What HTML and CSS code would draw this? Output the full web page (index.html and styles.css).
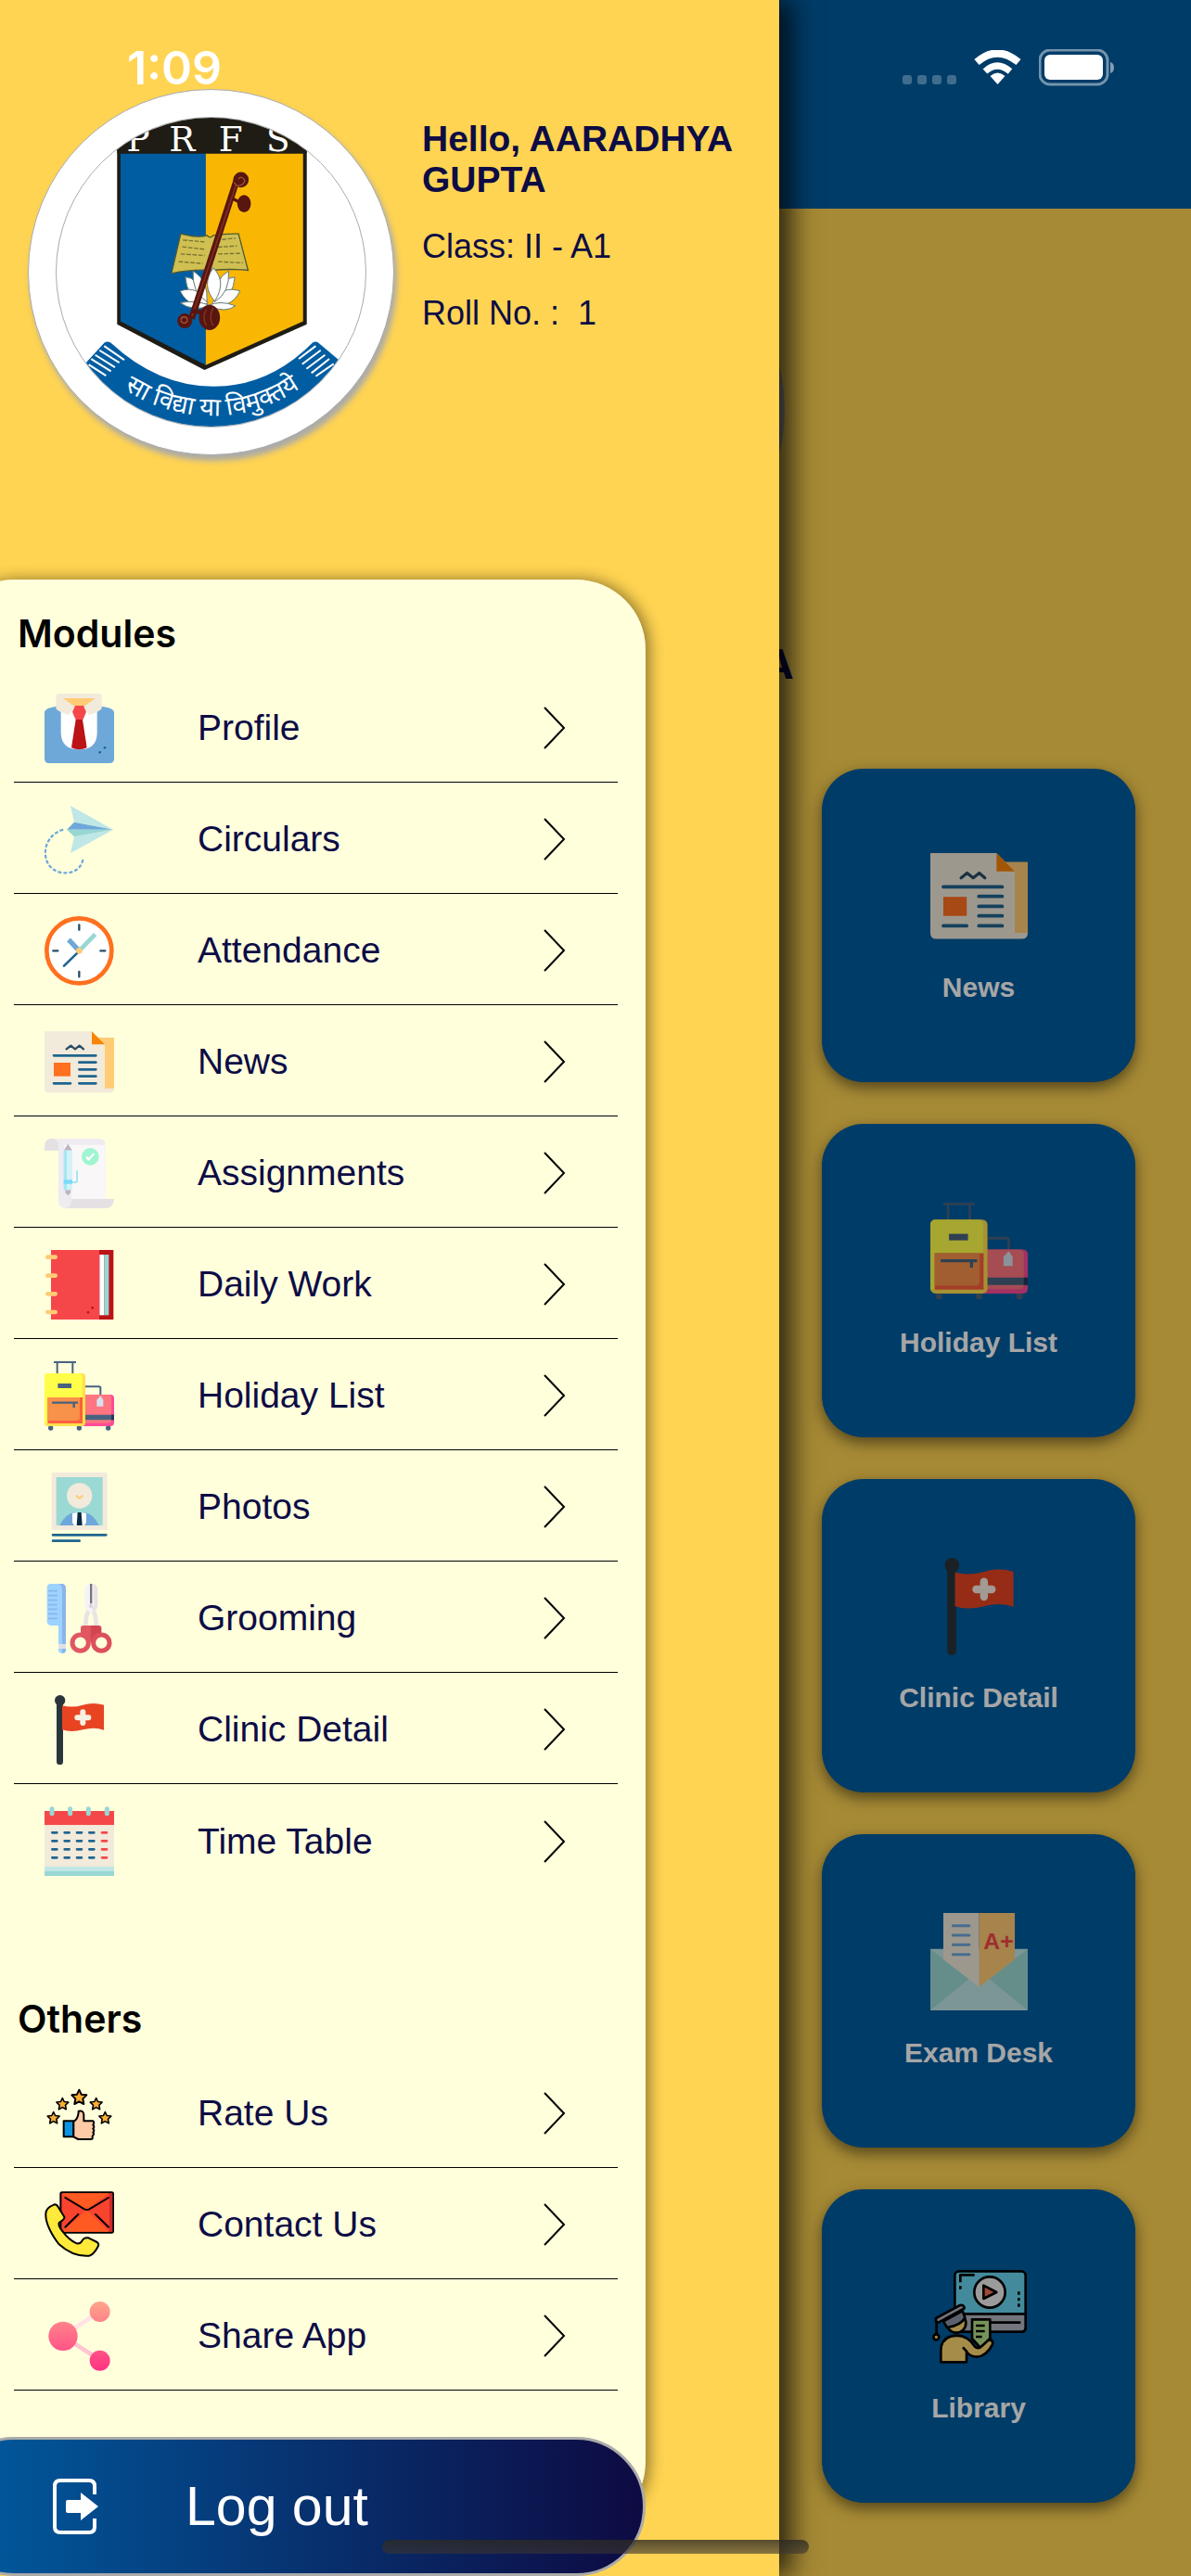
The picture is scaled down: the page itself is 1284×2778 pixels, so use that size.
FILE: index.html
```html
<!DOCTYPE html>
<html lang="en">

<head>
    <meta charset="UTF-8">
    <meta name="viewport" content="width=device-width, initial-scale=1.0">
    <title>PRFS School App</title>
    <link rel="stylesheet" href="styles.css">
</head>

<body>
    <!-- icons used in both the menu and the tiles -->
    <svg class="sprite" aria-hidden="true">
        <symbol id="icon-news" viewBox="0 0 225 225">
            <path d="M170 33h55v166h-55z" fill="#ffcb75" />
            <path d="M0 13h153l42 42v142h30q0 14-14 14H14q-14 0-14-14z" fill="#f2eada" />
            <path d="M153 13v42h42z" fill="#f98407" />
            <path d="M30 114h54v44H30z" fill="#ff701f" />
            <path d="M71 70l14-11 14 11 14-11 13 11" fill="none" stroke="#294c68" stroke-width="7" stroke-linecap="round" stroke-linejoin="round" />
            <path d="M30 91h136M112 113h54M112 136h54M112 158h54M112 181h54M30 181h54" stroke="#1f6590" stroke-width="8" stroke-linecap="round" />
        </symbol>
        <symbol id="icon-holiday" viewBox="0 0 225 225">
            <path d="M30 3h72M41 3v40M91 3v40M130 82h46q5 0 5 5v28" fill="none" stroke="#47637f" stroke-width="6" />
            <circle cx="20" cy="216" r="8" fill="#47637f" />
            <circle cx="112" cy="216" r="8" fill="#47637f" />
            <circle cx="206" cy="216" r="8" fill="#47637f" />
            <path d="M120 108h93q12 0 12 12v78q0 12-12 12h-93z" fill="#fe4b97" />
            <path d="M120 108h86q10 0 10 12v68q0 12-10 12h-86z" fill="#ff7580" />
            <path d="M120 173h105v17H120z" fill="#47637f" />
            <path d="M216 173h9v17h-9z" fill="#26365c" />
            <path d="M181 112l9 13v21h-21v-21z" fill="#d8e1ee" />
            <rect y="39" width="132" height="171" rx="12" fill="#ffe04d" />
            <path d="M12 39h98q12 0 12 12v138q0 12-12 12H0V51q0-12 12-12z" fill="#ffff4a" />
            <path d="M43 72h44v15H43z" fill="#47637f" />
            <path d="M10 117h113v84H10z" fill="#fc5f3f" />
            <path d="M10 117h104v64q0 11-11 11H10z" fill="#f8914a" />
            <path d="M24 134h84M95 134v16" stroke="#47637f" stroke-width="7" />
        </symbol>
        <symbol id="icon-clinic" viewBox="0 0 225 225">
            <circle cx="50" cy="17" r="17" fill="#2a353b" />
            <rect x="39" y="14" width="21" height="211" rx="10" fill="#2a353b" />
            <path d="M57 34Q90 42 124 32T192 32V113Q162 102 124 112T57 112z" fill="#e84422" />
            <path d="M124 55v35M106 73h36" stroke="#f7efe2" stroke-width="18" stroke-linecap="round" />
        </symbol>
        <symbol id="icon-arrow" viewBox="0 0 24 46">
            <path d="M1 1l21 22L1 45" fill="none" stroke="#000" stroke-width="2" />
        </symbol>
    </svg>

    <div class="status-bar">
        <span class="time">1:09</span>
        <div class="signals">
            <svg class="dots" viewBox="0 0 58 10">
                <g fill="#fff" opacity="0.25">
                    <rect width="10" height="10" rx="3" />
                    <rect x="16" width="10" height="10" rx="3" />
                    <rect x="32" width="10" height="10" rx="3" />
                    <rect x="48" width="10" height="10" rx="3" />
                </g>
            </svg>
            <svg class="wifi" viewBox="0 0 51 38">
                <path d="M3 13Q25 -6 48 13" fill="none" stroke="#fff" stroke-width="8" />
                <path d="M12 23Q25 11 39 23" fill="none" stroke="#fff" stroke-width="7" />
                <path d="M25.500 37l-8-9q8-7 16 0z" fill="#fff" />
            </svg>
            <svg class="battery" viewBox="0 0 82 40">
                <rect x="1" y="1" width="73" height="37" rx="11" fill="none" stroke="#fff" stroke-width="3" opacity="0.45" />
                <rect x="6" y="6" width="63" height="27" rx="6" fill="#fff" />
                <path d="M77 14q4 1 4 6t-4 6z" fill="#fff" opacity="0.5" />
            </svg>
        </div>
    </div>

    <main class="home">
        <header class="app-bar"></header>
        <div class="student">
            <div class="student-photo"></div>
            <h1>AARADHYA&nbsp; GUPTA</h1>
        </div>
        <div class="tiles">
            <a class="tile" href="#news">
                <svg><use href="#icon-news" /></svg>
                <span>News</span>
            </a>
            <a class="tile" href="#holidays">
                <svg><use href="#icon-holiday" /></svg>
                <span>Holiday List</span>
            </a>
            <a class="tile" href="#clinic">
                <svg><use href="#icon-clinic" /></svg>
                <span>Clinic Detail</span>
            </a>
            <a class="tile" href="#exams">
                <svg viewBox="0 0 315 315">
                    <path d="M0 116h315v199H0z" fill="#bfe7e6" />
                    <path d="M0 116l125 98L0 315zM315 116l-125 98 125 101z" fill="#9bdbd5" />
                    <path d="M42 0h116v239L42 150z" fill="#f2eada" />
                    <path d="M158 0h115v150l-115 89z" fill="#ffcb75" />
                    <path d="M73 41h53M73 72h53M73 103h53M73 134h53" stroke="#6ea8da" stroke-width="9" stroke-linecap="round" />
                    <text x="172" y="117" class="grade">A+</text>
                </svg>
                <span>Exam Desk</span>
            </a>
            <a class="tile" href="#library">
                <svg viewBox="0 0 315 315">
                    <g stroke="#000" stroke-width="8" stroke-linejoin="round">
                        <rect x="79" y="10" width="229" height="196" rx="14" fill="#67d6f0" />
                        <path d="M79 148h229v44q0 14-14 14H93q-14 0-14-14z" fill="#b1b4c0" />
                        <path d="M190 176h102M97 46V22h46M97 58v10M286 76v10M286 96v10M286 115v10" fill="none" />
                        <circle cx="192" cy="78" r="50" fill="#eee" />
                        <path d="M172 56v43l42-21z" fill="#f0705a" />
                        <circle cx="84" cy="178" r="31" fill="#fed76f" />
                        <path d="M42 172l62-34 8 22q-12 25-58 32z" fill="#8d96a8" />
                        <path d="M18 162l78-42q14-2 14 10L26 176l-8-4z" fill="#b1b4c0" />
                        <path d="M20 175v40" />
                        <circle cx="19" cy="223" r="9" fill="#fed76f" />
                        <path d="M135 166h58v62l-29 32-29-32z" fill="#b4e28a" />
                        <path d="M147 186h29M147 204h29M147 222h20" />
                        <path d="M34 304v-38q0-44 50-48 38 0 60 36 12 10 26-5l22-20q12 6 9 18-22 40-52 40-18 0-32-16v33z" fill="#fed76f" />
                        <path d="M105 256l14 15" />
                    </g>
                </svg>
                <span>Library</span>
            </a>
        </div>
    </main>

    <div class="overlay"></div>

    <aside class="drawer">
        <div class="drawer-header">
            <div class="avatar">
                <svg viewBox="183 379 1000 1000" role="img" aria-label="School crest">
                    <path d="M379 370h614v124H379z" fill="#1f1c15" />
                    <path d="M379 480h614v568L662 1196 379 1048z" fill="#1f1c15" />
                    <path d="M390 495h276v685L390 1038z" fill="#005da2" />
                    <path d="M666 495h315v543L666 1180z" fill="#f9b704" />
                    <text y="486" x="410 547 708 862" class="crest-name">PRFS</text>
                    <!-- book -->
                    <path d="M585 755q60 15 85 5 10 12 20 0 40-6 82-5l31 118q-60-6-115 0-70-4-133 10z" fill="#d0c052" stroke="#4f5a35" stroke-width="4" />
                    <path d="M592 775l70 6M590 797l74 8M585 820l78 5M578 845l78 6M700 775l62-6M705 798l62-4M706 820l76-2M706 845l80 4" stroke="#77742f" stroke-width="4" stroke-dasharray="14 5" />
                    <!-- lotus -->
                    <g fill="#fff" stroke="#677" stroke-width="3">
                        <path d="M600 895q40 0 60 70l-10 20q-45-30-50-90zM760 895q-40 0-60 70l10 20q45-30 50-90z" />
                        <path d="M583 940q60-20 90 40-60 20-90-40zM777 940q-60-20-90 40 60 20 90-40z" />
                        <path d="M583 978q50-10 100 10-60 20-100-10zM762 988q-50-20-90 0 60 25 90 0z" />
                        <path d="M625 875q50 30 45 100-50-30-45-100zM740 875q-50 30-45 100 50-30 45-100z" />
                        <path d="M690 865q45 45 5 108-45-50-5-108z" />
                    </g>
                    <!-- veena -->
                    <path d="M768 575L620 1030" stroke="#57160f" stroke-width="21" />
                    <path d="M766 590L622 1020" stroke="#842c22" stroke-width="5" />
                    <circle cx="780" cy="580" r="25" fill="#57160f" />
                    <path d="M772 578q6-12 16-2t-6 20-24-8" fill="none" stroke="#a3523d" stroke-width="4" />
                    <ellipse cx="790" cy="657" rx="22" ry="28" fill="#57160f" />
                    <path d="M752 640l26 14" stroke="#57160f" stroke-width="10" />
                    <circle cx="598" cy="1037" r="24" fill="#57160f" />
                    <circle cx="596" cy="1034" r="10" fill="none" stroke="#a3523d" stroke-width="4" />
                    <ellipse cx="678" cy="1026" rx="34" ry="41" fill="#57160f" />
                    <path d="M620 1005l40 5" stroke="#57160f" stroke-width="14" />
                    <path d="M668 1000q-16 25 0 52M690 995q-16 30 0 58" fill="none" stroke="#8b3328" stroke-width="4" />
                    <!-- ribbon -->
                    <path d="M280 1170l58-63q10-6 20 0Q510 1248 690 1249t322-142q10-6 18 0l75 63v240H250z" fill="#005da2" />
                    <path d="M337 1118l65 45M322 1132l64 40M308 1147l64 40M295 1160l64 40M287 1178l56 36M1022 1118l-55 42M1038 1132l-60 45M1052 1147l-60 45M1066 1160l-58 46M1080 1176l-58 40" stroke="#fff" stroke-width="6" />
                    <path id="motto-curve" d="M366 1236Q520 1344 690 1344T1006 1229" fill="none" />
                    <text class="crest-motto"><textPath href="#motto-curve" startOffset="50%">सा विद्या या विमुक्तये</textPath></text>
                </svg>
            </div>
            <div class="student-info">
                <h2>Hello, AARADHYA GUPTA</h2>
                <p>Class: II - A1</p>
                <p>Roll No. :&nbsp; 1</p>
            </div>
        </div>

        <nav class="panel">
            <h3>Modules</h3>
            <ul class="menu">
                <li><a href="#profile">
                    <svg class="icon" viewBox="0 0 225 225">
                        <path d="M0 60q0-12 35-18h155q35 6 35 18v151q0 14-14 14H14q-14 0-14-14z" fill="#6ea8d9" />
                        <path d="M53 42h117v85q0 54-58 54t-59-54z" fill="#fff" />
                        <path d="M37 12Q37 0 49 0h124q12 0 12 12v36q-4 8-40 22l-18-28H98L78 70Q40 56 37 48z" fill="#f2eada" />
                        <path d="M60 15h104l-36 26H97z" fill="#ffcb75" />
                        <path d="M99 39h27l9 20-11 26h-23L90 59z" fill="#f5474a" />
                        <path d="M101 84h22l14 91q-25 12-50 0z" fill="#bb1316" />
                        <circle cx="179" cy="190" r="4" fill="#1f6590" />
                        <circle cx="195" cy="175" r="4" fill="#1f6590" />
                    </svg>
                    <span>Profile</span>
                    <svg class="arrow"><use href="#icon-arrow" /></svg>
                </a></li>
                <li><a href="#circulars">
                    <svg class="icon" viewBox="0 0 225 225">
                        <path d="M84 3l138 77L96 56zM84 156l138-76L96 103z" fill="#bfe7e6" />
                        <path d="M96 56l126 24H72z" fill="#6ea8da" />
                        <path d="M96 103l126-23H72z" fill="#98d7d3" />
                        <path d="M58 81C-20 105-15 220 68 220 100 220 122 200 125 172" fill="none" stroke="#6ea8da" stroke-width="7" stroke-linecap="round" stroke-dasharray="6 12" />
                    </svg>
                    <span>Circulars</span>
                    <svg class="arrow"><use href="#icon-arrow" /></svg>
                </a></li>
                <li><a href="#attendance">
                    <svg class="icon" viewBox="0 0 225 225">
                        <circle cx="112" cy="112" r="105" fill="#fff" stroke="#ff701f" stroke-width="14" />
                        <path d="M112 28v16M112 180v16M28 112h15M181 112h15" stroke="#294c68" stroke-width="7" stroke-linecap="round" />
                        <path d="M112 112L78 76" stroke="#6ea8da" stroke-width="16" />
                        <path d="M112 112l52-53" stroke="#98d7d3" stroke-width="14" />
                        <path d="M110 115l-47 46" stroke="#1f6590" stroke-width="8" stroke-linecap="round" />
                        <circle cx="112" cy="112" r="10" fill="#ffcb75" />
                    </svg>
                    <span>Attendance</span>
                    <svg class="arrow"><use href="#icon-arrow" /></svg>
                </a></li>
                <li><a href="#news">
                    <svg class="icon"><use href="#icon-news" /></svg>
                    <span>News</span>
                    <svg class="arrow"><use href="#icon-arrow" /></svg>
                </a></li>
                <li><a href="#assignments">
                    <svg class="icon" viewBox="0 0 225 225">
                        <path d="M22 0h155q20 0 20 22v180H45V22z" fill="#efecf1" />
                        <path d="M62 20h135v176H88z" fill="#f9f7f8" />
                        <path d="M0 38V22a22 22 0 0 1 45 0v16z" fill="#e4e0e4" />
                        <path d="M45 190v12q2 23 26 23h40v-30H78L62 170z" fill="#efecf1" />
                        <path d="M88 195h137q-2 30-30 30H68q20-4 20-30z" fill="#e4e0e4" />
                        <path d="M62 38l14-21 14 21zM67 165h18v10l-9 9-9-9z" fill="#bfb4c0" />
                        <path d="M62 38h28v128H62z" fill="#d3f1f8" />
                        <path d="M62 38h10v128H62z" fill="#a5e7f0" />
                        <path d="M88 141h13q4 0 4-4v-32" fill="none" stroke="#a5e7f0" stroke-width="6" stroke-linecap="round" />
                        <path d="M62 133h28v13H62z" fill="#77dcfa" />
                        <circle cx="148" cy="58" r="28" fill="#9ff5d0" />
                        <path d="M137 61l6 6 15-17" fill="none" stroke="#fff" stroke-width="7" stroke-linecap="round" />
                    </svg>
                    <span>Assignments</span>
                    <svg class="arrow"><use href="#icon-arrow" /></svg>
                </a></li>
                <li><a href="#daily-work">
                    <svg class="icon" viewBox="0 0 225 225">
                        <path d="M170 0h53v225h-53z" fill="#bb1316" />
                        <path d="M21 0h156v225H21z" fill="#f5474a" />
                        <path d="M178 15h15v196h-15z" fill="#fff" />
                        <path d="M193 15h15v196h-15z" fill="#98d7d3" />
                        <path d="M10 23h25M10 83h25M10 142h25M10 201h25" stroke="#ffcb75" stroke-width="14" stroke-linecap="round" />
                        <circle cx="155" cy="187" r="4" fill="#bb1316" />
                        <circle cx="141" cy="202" r="4" fill="#bb1316" />
                    </svg>
                    <span>Daily Work</span>
                    <svg class="arrow"><use href="#icon-arrow" /></svg>
                </a></li>
                <li><a href="#holidays">
                    <svg class="icon"><use href="#icon-holiday" /></svg>
                    <span>Holiday List</span>
                    <svg class="arrow"><use href="#icon-arrow" /></svg>
                </a></li>
                <li><a href="#photos">
                    <svg class="icon" viewBox="0 0 225 225">
                        <path d="M23 0h180v186H23z" fill="#f2eada" />
                        <path d="M38 15h150v156H38z" fill="#9bd9d5" />
                        <circle cx="113" cy="75" r="41" fill="#f2eada" />
                        <path d="M104 76q9 12 18 0" fill="none" stroke="#ffcb75" stroke-width="7" stroke-linecap="round" />
                        <path d="M49 171q18-38 50-42h28q32 4 49 42z" fill="#6ea8da" />
                        <path d="M90 132q22-6 45 0v30l-6 9H96l-6-9z" fill="#fff" />
                        <path d="M107 129h12l3 42h-18z" fill="#0b2a43" />
                        <path d="M27 202h172M27 221h86" stroke="#1f6590" stroke-width="8" stroke-linecap="round" />
                    </svg>
                    <span>Photos</span>
                    <svg class="arrow"><use href="#icon-arrow" /></svg>
                </a></li>
                <li><a href="#grooming">
                    <svg class="icon" viewBox="0 0 225 225">
                        <path d="M20 0h34q15 0 15 16v198q0 11-12 11t-12-11v-79H22q-14 0-14-14V14Q8 0 20 0z" fill="#9dd3ff" />
                        <path d="M46 0h8q15 0 15 16v198q0 11-12 11V20Q57 4 46 0z" fill="#8bb5ea" />
                        <path d="M12 23h29M12 38h29M12 53h29M12 68h29M12 82h29M12 97h29M12 112h29" stroke="#8bb5ea" stroke-width="5" />
                        <path d="M45 195h24v15H45z" fill="#e4e0e4" />
                        <path d="M143 88q-10 12-10 50M157 88q10 12 10 50" fill="none" stroke="#e9e3e5" stroke-width="14" />
                        <path d="M145 0h12q15 4 15 20v48q0 14-14 22h-14q-14-8-14-22V20q0-16 15-20z" fill="#f5f3f7" />
                        <path d="M157 0q15 4 15 20v48q0 14-14 22-8-4 2-18z" fill="#e9e3e5" />
                        <path d="M147 0h7v64h-7z" fill="#777" />
                        <circle cx="150" cy="72" r="7" fill="#ddd5d5" />
                        <path d="M117 165v-22q0-8 8-8h25v55z" fill="#e05761" />
                        <path d="M184 165v-22q0-8-8-8h-26v55z" fill="#d24652" />
                        <circle cx="116" cy="191" r="26" fill="none" stroke="#e05761" stroke-width="15" />
                        <circle cx="184" cy="191" r="26" fill="none" stroke="#dc505b" stroke-width="15" />
                    </svg>
                    <span>Grooming</span>
                    <svg class="arrow"><use href="#icon-arrow" /></svg>
                </a></li>
                <li><a href="#clinic">
                    <svg class="icon"><use href="#icon-clinic" /></svg>
                    <span>Clinic Detail</span>
                    <svg class="arrow"><use href="#icon-arrow" /></svg>
                </a></li>
                <li><a href="#time-table">
                    <svg class="icon" viewBox="0 0 225 225">
                        <path d="M0 15h225v46H0z" fill="#f5474a" />
                        <path d="M0 61h225v134H0z" fill="#f2eada" />
                        <path d="M0 195h225v15H0z" fill="#bfe7e6" />
                        <path d="M0 210h225v15H0z" fill="#98d7d3" />
                        <path d="M24 8v15M83 8v15M142 8v15M202 8v15" stroke="#98d7d3" stroke-width="15" stroke-linecap="round" />
                        <path d="M25 85h160M25 112h160M25 139h160M25 166h160" stroke="#1f6590" stroke-width="8" stroke-linecap="round" stroke-dasharray="15 25" />
                        <path d="M186 85h15M186 112h15M186 139h15M186 166h15" stroke="#f5474a" stroke-width="8" stroke-linecap="round" />
                    </svg>
                    <span>Time Table</span>
                    <svg class="arrow"><use href="#icon-arrow" /></svg>
                </a></li>
            </ul>

            <h3>Others</h3>
            <ul class="menu">
                <li><a href="#rate">
                    <svg class="icon" viewBox="0 5 225 225">
                        <defs>
                            <path id="star" d="M0-23l7 15 17 2-12 12 3 17L0 15l-15 8 3-17L-24-6l17-2z" />
                        </defs>
                        <g fill="#fbae34" stroke="#000" stroke-width="6" stroke-linejoin="round">
                            <use href="#star" x="112" y="63" />
                            <use href="#star" transform="translate(58 85) scale(.8)" />
                            <use href="#star" transform="translate(167 85) scale(.8)" />
                            <use href="#star" transform="translate(29 130) scale(.8)" />
                            <use href="#star" transform="translate(196 130) scale(.8)" />
                            <path d="M62 141h32v51H62z" fill="#0f93e0" />
                            <path d="M94 143q16-10 16-34 16-4 17 12v20h30q5 4 0 13 6 5 0 12 6 5 0 12 5 5-2 12v8q-2 2-6 2h-40l-15-8z" fill="#ffcaa6" />
                        </g>
                    </svg>
                    <span>Rate Us</span>
                    <svg class="arrow"><use href="#icon-arrow" /></svg>
                </a></li>
                <li><a href="#contact">
                    <svg class="icon" viewBox="0 5 225 225">
                        <g stroke="#000" stroke-width="6" stroke-linejoin="round" stroke-linecap="round">
                            <rect x="52" y="12" width="170" height="130" rx="5" fill="#f8432f" />
                            <path d="M56 15h152l-71 54zM56 139l81-70 71 70z" fill="#ff5a22" stroke="none" />
                            <path d="M210 15h10v124h-10z" fill="#c92a2c" stroke="none" />
                            <path d="M67 29l62 37q8 4 16 0l62-37M67 124l42-41M207 124l-42-41" fill="none" />
                            <path d="M4 80q0-18 28-29 8 0 12 8l20 32q2 8-16 18-6 8 8 26 24 32 48 42 10 2 16-6 6-14 22-12l28 14q8 6 2 16-14 26-28 28-52 4-98-38Q2 120 4 80z" fill="#ffe93b" />
                        </g>
                    </svg>
                    <span>Contact Us</span>
                    <svg class="arrow"><use href="#icon-arrow" /></svg>
                </a></li>
                <li><a href="#share">
                    <svg class="icon" viewBox="0 5 225 225">
                        <defs>
                            <linearGradient id="share-fill" gradientUnits="userSpaceOnUse" x1="0" y1="0" x2="0" y2="225">
                                <stop offset="0" stop-color="#ffa78c" />
                                <stop offset="1" stop-color="#ff3484" />
                            </linearGradient>
                        </defs>
                        <path d="M59 116l119-78" stroke="#ffe3e6" stroke-width="14" />
                        <path d="M59 116l119 78" stroke="#ffc5d2" stroke-width="14" />
                        <g fill="url(#share-fill)">
                            <circle cx="60" cy="117" r="47" />
                            <circle cx="179" cy="38" r="33" />
                            <circle cx="179" cy="196" r="33" />
                        </g>
                    </svg>
                    <span>Share App</span>
                    <svg class="arrow"><use href="#icon-arrow" /></svg>
                </a></li>
            </ul>
        </nav>

        <button class="logout" type="button">
            <svg viewBox="0 0 50 60">
                <path d="M45 17V8q0-6-6-6H8Q2 2 2 8v44q0 6 6 6h31q6 0 6-6v-9" fill="none" stroke="#fff" stroke-width="4" />
                <path d="M16 23h14v-8l19 15-19 15v-8H16q-2 0-2-2V25q0-2 2-2z" fill="#fff" />
            </svg>
            <span>Log out</span>
        </button>
    </aside>

    <div class="home-indicator"></div>
</body>

</html>
```

FILE: styles.css
```css
* {
    box-sizing: border-box;
}

body {
    margin: 0;
    position: relative;
    min-height: 100vh;
    background: #ffd452;
    font-family: "Liberation Sans", Arial, sans-serif;
    color: #0d0c45;
    overflow-x: hidden;
}

h1,
h2,
h3,
p,
ul {
    margin: 0;
    padding: 0;
}

a {
    color: inherit;
    text-decoration: none;
}

.sprite {
    position: absolute;
    width: 0;
    height: 0;
}

/* status bar */
.status-bar {
    position: absolute;
    top: 0;
    left: 0;
    right: 0;
    z-index: 30;
    display: flex;
    justify-content: space-between;
    align-items: center;
    padding: 42px 82px 0 137px;
}

.time {
    font-family: Inter, sans-serif;
    font-size: 50px;
    font-weight: 600;
    line-height: 62px;
    color: #fff;
}

.signals {
    display: flex;
    align-items: flex-end;
    gap: 19px;
}

.dots {
    width: 58px;
    height: 10px;
    margin-bottom: 2px;
}

.wifi {
    width: 51px;
    height: 38px;
    margin-bottom: 1px;
}

.battery {
    width: 82px;
    height: 40px;
}

/* home screen */
.home {
    min-height: 100vh;
}

.app-bar {
    height: 225px;
    background: #005ca0;
}

.student {
    display: flex;
    flex-direction: column;
    align-items: center;
    gap: 42px;
    padding-top: 13px;
}

.student-photo {
    width: 408px;
    height: 408px;
    border-radius: 50%;
    background: #fff;
    border: 8px solid #aaa;
}

.student h1 {
    font-family: Inter, sans-serif;
    font-size: 44px;
    line-height: 56px;
}

.tiles {
    display: grid;
    grid-template-columns: repeat(3, 1fr);
    gap: 45px 75px;
    padding: 85px 60px 0;
}

.tile {
    grid-column: 3;
    display: flex;
    flex-direction: column;
    align-items: center;
    justify-content: center;
    gap: 28px;
    aspect-ratio: 1;
    border-radius: 45px;
    background: #005ca0;
    box-shadow: 0 6px 16px rgba(0, 0, 0, 0.5);
    color: #fff;
    font-size: 30px;
    font-weight: bold;
    line-height: 36px;
}

.tile svg {
    width: 105px;
    height: 105px;
}

.grade {
    font-size: 74px;
    font-weight: bold;
    fill: #f5474a;
}

.overlay {
    position: absolute;
    top: 0;
    right: 0;
    bottom: 0;
    left: 0;
    background: rgba(0, 0, 0, 0.35);
}

/* side menu */
.drawer {
    position: absolute;
    top: 0;
    bottom: 0;
    left: 0;
    z-index: 20;
    width: 65.4%;
    display: flex;
    flex-direction: column;
    background: #ffd452;
    box-shadow: 14px 0 26px rgba(0, 0, 0, 0.7);
}

.drawer-header {
    display: flex;
    align-items: flex-start;
    gap: 30px;
    height: 625px;
    padding: 96px 40px 0 30px;
}

.avatar {
    flex: none;
    width: 395px;
    height: 395px;
    padding: 29px;
    border: 1px solid #aaa;
    border-radius: 50%;
    background: #fff;
    box-shadow: 3px 6px 6px #aaa;
}

.avatar svg {
    display: block;
    width: 100%;
    height: 100%;
    border: 1px solid #aaa;
    border-radius: 50%;
}

.crest-name {
    font-family: "DejaVu Serif", serif;
    font-size: 112px;
    fill: #fff;
}

.crest-motto {
    font-family: "Noto Sans", "Noto Sans Devanagari", sans-serif;
    font-size: 82px;
    text-anchor: middle;
    fill: #fff;
}

.student-info {
    padding-top: 32px;
}

.student-info h2 {
    margin-bottom: 28px;
    font-size: 39px;
    line-height: 44px;
}

.student-info p {
    margin-bottom: 28px;
    font-size: 36px;
    line-height: 44px;
}

.panel {
    flex: 1;
    margin: 0 144px 48px -60px;
    padding: 30px 30px 0 75px;
    border-radius: 75px;
    background: #ffffdc;
    box-shadow: 4px 0 16px rgba(0, 0, 0, 0.45);
}

.panel h3 {
    margin-bottom: 13px;
    padding-left: 4px;
    font-family: Inter, sans-serif;
    font-size: 41px;
    font-weight: 600;
    line-height: 56px;
    color: #000;
}

.menu {
    list-style: none;
}

.menu + h3 {
    margin-top: 105px;
}

.menu a {
    display: flex;
    align-items: center;
    height: 120px;
    padding: 3px 56px 0 33px;
    border-bottom: 1px solid #000;
    font-size: 39px;
}

.menu:first-of-type li:last-child a {
    border-bottom: none;
}

.menu span {
    flex: 1;
    padding-left: 90px;
}

.icon {
    width: 75px;
    height: 75px;
}

.arrow {
    width: 24px;
    height: 46px;
}

.logout {
    position: absolute;
    left: -60px;
    right: 144px;
    bottom: 0;
    display: flex;
    align-items: center;
    gap: 93px;
    height: 150px;
    padding: 0 114px;
    border: 3px solid #aaa;
    border-radius: 75px;
    background: linear-gradient(to right, #005ca0, #0e0a42);
    color: #fff;
    font-family: inherit;
    font-size: 59px;
}

.logout svg {
    width: 50px;
    height: 60px;
}

.home-indicator {
    position: absolute;
    bottom: 24px;
    left: 50%;
    z-index: 30;
    width: 460px;
    height: 15px;
    margin-left: -230px;
    border-radius: 8px;
    background: linear-gradient(rgba(44, 42, 36, 0.8), rgba(60, 54, 50, 0.6));
}
```
